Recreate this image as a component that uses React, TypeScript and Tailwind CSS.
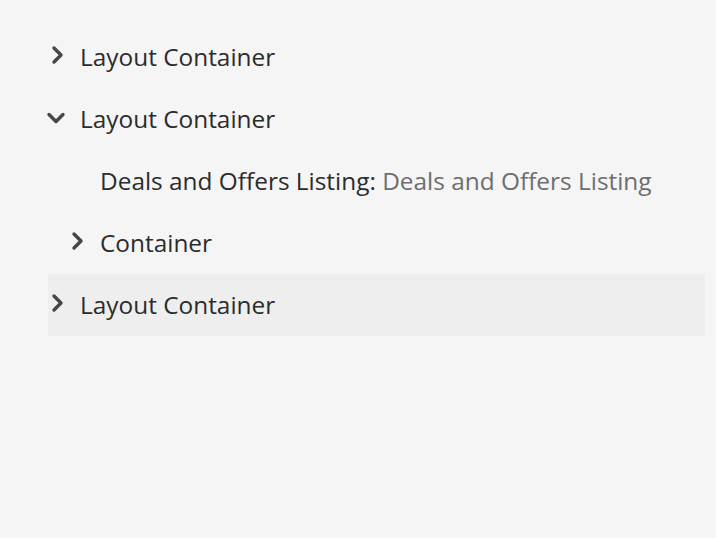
import { ReactNode } from "react";

function Chevron({ open }: { open?: boolean }) {
  return (
    <svg width="18" height="18" viewBox="0 0 18 18" overflow="visible" className="shrink-0 text-[#464646]">
      {open ? (
        <path d="M1 4.5 L8 11.5 L15 4.5" fill="none" stroke="currentColor" strokeWidth="3.4" strokeLinecap="round" strokeLinejoin="round" />
      ) : (
        <path d="M6 0 L13 7 L6 14" fill="none" stroke="currentColor" strokeWidth="3.4" strokeLinecap="round" strokeLinejoin="round" />
      )}
    </svg>
  );
}

function Row({
  level,
  chevron,
  open,
  active,
  children,
}: {
  level: number;
  chevron?: boolean;
  open?: boolean;
  active?: boolean;
  children: ReactNode;
}) {
  return (
    <div
      className={`flex h-[62px] items-center ${active ? "bg-[#eeeeee]" : ""}`}
      style={{ paddingLeft: level * 20 }}
    >
      <div className="flex w-[32px] items-center">{chevron && <Chevron open={open} />}</div>
      <span className="text-[24.4px] text-[#2c2c2c]">{children}</span>
    </div>
  );
}

export default function App() {
  return (
    <div
      className="min-h-[538px] w-full bg-[#f5f5f5] pl-[48px] pr-[11px] pt-[26px]"
      style={{ fontFamily: '"Open Sans", sans-serif' }}
    >
      <Row level={0} chevron>
        Layout Container
      </Row>
      <Row level={0} chevron open>
        Layout Container
      </Row>
      <Row level={1}>
        Deals and Offers Listing: <span className="text-[#6e6e6e]">Deals and Offers Listing</span>
      </Row>
      <Row level={1} chevron>
        Container
      </Row>
      <Row level={0} chevron active>
        Layout Container
      </Row>
    </div>
  );
}
